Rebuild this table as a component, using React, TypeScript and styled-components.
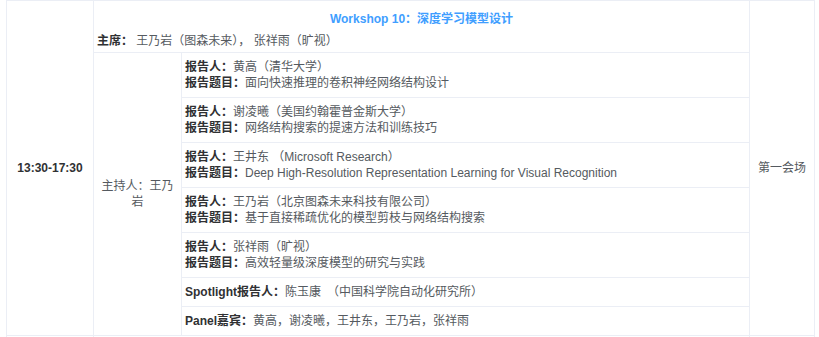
import styled, { createGlobalStyle } from 'styled-components'

const GlobalStyle = createGlobalStyle`
  body {
    margin: 0;
    background: #fff;
    font-family: "Liberation Sans", "Noto Sans CJK SC", sans-serif;
    font-size: 12px;
    line-height: 16px;
    color: #555a60;
  }
`

const Page = styled.div`
  padding-left: 6px;
`

const Schedule = styled.div`
  display: grid;
  grid-template-columns: 87px 656px 65px;
  width: max-content;
  border-top: 1px solid #ebeef5;
  border-left: 1px solid #ebeef5;
`

const Cell = styled.div<{ $fill?: boolean }>`
  border-right: 1px solid #ebeef5;
  border-bottom: 1px solid #ebeef5;
  min-height: ${({ $fill }) => ($fill ? '1px' : '0')};
`

const CenterCell = styled(Cell)<{ $bold?: boolean }>`
  display: flex;
  align-items: center;
  justify-content: center;
  text-align: center;
  font-weight: ${({ $bold }) => ($bold ? 700 : 400)};
  color: ${({ $bold }) => ($bold ? '#303133' : '#555a60')};
`

const SessionCell = styled(Cell)`
  display: flex;
  flex-direction: column;
`

const Header = styled.div`
  padding: 10px 3px 3px;
  border-bottom: 1px solid #ebeef5;
`

const Title = styled.div`
  text-align: center;
  color: #409eff;
  font-weight: 700;
  margin-bottom: 6px;
`

const Body = styled.div`
  display: grid;
  grid-template-columns: 88px 1fr;
`

const Host = styled.div`
  border-right: 1px solid #ebeef5;
  padding: 0 6px;
  display: flex;
  align-items: center;
  justify-content: center;
  text-align: center;
`

const Talks = styled.div`
  display: flex;
  flex-direction: column;
`

const Talk = styled.div`
  padding: 6px 3px;
  border-bottom: 1px solid #ebeef5;

  &:last-child {
    border-bottom: none;
  }
`

const Label = styled.b`
  font-weight: 700;
  color: #303133;
`

interface TalkItem {
  speaker: string
  title?: string
  speakerLabel?: string
}

const talks: TalkItem[] = [
  { speaker: '黄高（清华大学）', title: '面向快速推理的卷积神经网络结构设计' },
  { speaker: '谢凌曦（美国约翰霍普金斯大学）', title: '网络结构搜索的提速方法和训练技巧' },
  {
    speaker: '王井东 （Microsoft Research）',
    title: 'Deep High-Resolution Representation Learning for Visual Recognition',
  },
  { speaker: '王乃岩（北京图森未来科技有限公司）', title: '基于直接稀疏优化的模型剪枝与网络结构搜索' },
  { speaker: '张祥雨（旷视）', title: '高效轻量级深度模型的研究与实践' },
  { speakerLabel: 'Spotlight报告人：', speaker: '陈玉康　（中国科学院自动化研究所）' },
  { speakerLabel: 'Panel嘉宾：', speaker: '黄高，谢凌曦，王井东，王乃岩，张祥雨' },
]

export default function App() {
  return (
    <>
      <GlobalStyle />
      <Page>
        <Schedule>
          <CenterCell $bold>13:30-17:30</CenterCell>
          <SessionCell>
            <Header>
              <Title>Workshop 10：深度学习模型设计</Title>
              <div>
                <Label>主席：</Label> 王乃岩（图森未来）， 张祥雨（旷视）
              </div>
            </Header>
            <Body>
              <Host>主持人：王乃岩</Host>
              <Talks>
                {talks.map((t) => (
                  <Talk key={t.speaker}>
                    <div>
                      <Label>{t.speakerLabel ?? '报告人：'}</Label>
                      {t.speaker}
                    </div>
                    {t.title && (
                      <div>
                        <Label>报告题目：</Label>
                        {t.title}
                      </div>
                    )}
                  </Talk>
                ))}
              </Talks>
            </Body>
          </SessionCell>
          <CenterCell>第一会场</CenterCell>
          <Cell $fill />
          <Cell $fill />
          <Cell $fill />
        </Schedule>
      </Page>
    </>
  )
}
